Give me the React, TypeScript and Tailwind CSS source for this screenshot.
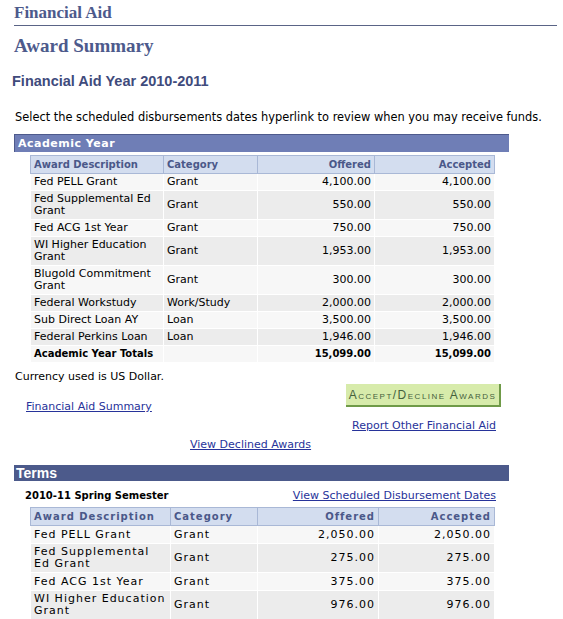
import React from "react";

type Row = { desc: string; cat: string; offered: string; accepted: string };

const yearRows: Row[] = [
  { desc: "Fed PELL Grant", cat: "Grant", offered: "4,100.00", accepted: "4,100.00" },
  { desc: "Fed Supplemental Ed Grant", cat: "Grant", offered: "550.00", accepted: "550.00" },
  { desc: "Fed ACG 1st Year", cat: "Grant", offered: "750.00", accepted: "750.00" },
  { desc: "WI Higher Education Grant", cat: "Grant", offered: "1,953.00", accepted: "1,953.00" },
  { desc: "Blugold Commitment Grant", cat: "Grant", offered: "300.00", accepted: "300.00" },
  { desc: "Federal Workstudy", cat: "Work/Study", offered: "2,000.00", accepted: "2,000.00" },
  { desc: "Sub Direct Loan AY", cat: "Loan", offered: "3,500.00", accepted: "3,500.00" },
  { desc: "Federal Perkins Loan", cat: "Loan", offered: "1,946.00", accepted: "1,946.00" },
];

const termRows: Row[] = [
  { desc: "Fed PELL Grant", cat: "Grant", offered: "2,050.00", accepted: "2,050.00" },
  { desc: "Fed Supplemental Ed Grant", cat: "Grant", offered: "275.00", accepted: "275.00" },
  { desc: "Fed ACG 1st Year", cat: "Grant", offered: "375.00", accepted: "375.00" },
  { desc: "WI Higher Education Grant", cat: "Grant", offered: "976.00", accepted: "976.00" },
];

const verdana = "font-['DejaVu_Sans',Verdana,sans-serif]";

function AwardTable({ rows, widths, spaced, totals }: { rows: Row[]; widths: number[]; spaced?: boolean; totals?: boolean }) {
  const th = "border border-[#a9b8d6] bg-[#d3ddef] px-[3px] py-[2px] text-[10px] font-bold text-[#4a5889] leading-[12px]";
  const td = "border border-white px-[3px] py-[2px] align-middle leading-[12px]";
  return (
    <table
      className={`ml-[16px] border-collapse text-[11px] text-black ${verdana} ${spaced ? "tracking-[1px]" : ""}`}
    >
      <colgroup>
        {widths.map((w, i) => (
          <col key={i} style={{ width: w }} />
        ))}
      </colgroup>
      <thead>
        <tr className="h-[18px]">
          <th className={`${th} text-left`}>Award Description</th>
          <th className={`${th} text-left`}>Category</th>
          <th className={`${th} text-right`}>Offered</th>
          <th className={`${th} text-right`}>Accepted</th>
        </tr>
      </thead>
      <tbody>
        {rows.map((r, i) => (
          <tr key={r.desc} className={`${spaced ? "h-[18px]" : "h-[17px]"} ${i % 2 === 0 ? "bg-[#f7f7f7]" : "bg-[#ececec]"}`}>
            <td className={td}>{r.desc}</td>
            <td className={td}>{r.cat}</td>
            <td className={`${td} text-right`}>{r.offered}</td>
            <td className={`${td} text-right`}>{r.accepted}</td>
          </tr>
        ))}
        {totals && (
          <tr className="h-[17px] bg-[#f7f7f7] text-[10px] font-bold">
            <td className={`${td} whitespace-nowrap`}>Academic Year Totals</td>
            <td className={td}></td>
            <td className={`${td} text-right`}>15,099.00</td>
            <td className={`${td} text-right`}>15,099.00</td>
          </tr>
        )}
      </tbody>
    </table>
  );
}

export default function App() {
  const link = `text-[11px] leading-[13px] text-[#27339a] underline ${verdana}`;
  return (
    <div className="w-[563px] bg-white pb-4 pl-[14px]">
      <div className="mr-[6px] border-b border-[#5a6486] pt-[4px] pb-[3px]">
        <h1 className="font-['Liberation_Serif',serif] text-[17px] font-bold leading-[18px] text-[#4d5a8c]">
          Financial Aid
        </h1>
      </div>
      <h2 className="mt-[10px] font-['Liberation_Serif',serif] text-[19px] font-bold leading-[20px] text-[#4d5a8c]">
        Award Summary
      </h2>
      <h3 className="mt-[17px] -ml-[2px] font-['Liberation_Sans',Arial,sans-serif] text-[14.5px] font-bold leading-[16px] text-[#3f4b7c]">
        Financial Aid Year 2010-2011
      </h3>
      <p className={`mt-[22px] ml-[1px] text-[11.4px] leading-[13px] text-black ${verdana}`}>
        Select the scheduled disbursements dates hyperlink to review when you may receive funds.
      </p>

      <div className="mt-[10px] flex h-[18px] w-[495px] items-center border-t border-l border-[#4e5a8c] bg-[#6f7eb6] pl-[3px]">
        <span className={`text-[11px] font-bold leading-[14px] tracking-[0.5px] text-white ${verdana}`}>Academic Year</span>
      </div>
      <div className="mt-[3px]">
        <AwardTable rows={yearRows} widths={[133, 94, 117, 120]} totals />
      </div>

      <p className={`mt-[7px] ml-[1px] text-[11px] leading-[13px] text-black ${verdana}`}>Currency used is US Dollar.</p>

      <div className="mt-[1px] flex w-[487px] items-start justify-between">
        <span className={`mt-[16px] ml-[12px] ${link}`}>Financial Aid Summary</span>
        <button className="h-[23px] w-[155px] border-r-2 border-b-2 border-[#6f9a48] bg-[#d7ebab] font-['Liberation_Sans',Arial,sans-serif] text-[12px] leading-[20px] tracking-[1.5px] text-[#45613c] [font-variant:small-caps]">
          Accept/Decline Awards
        </button>
      </div>
      <div className="mt-[6px] flex w-[482px] justify-end">
        <span className={link}>Report Other Financial Aid</span>
      </div>
      <div className="mt-[6px] flex pl-[176px]">
        <span className={link}>View Declined Awards</span>
      </div>

      <div className="mt-[14px] flex h-[16px] w-[495px] items-center bg-[#4c5a8b] pl-[2px]">
        <span className="font-['Liberation_Sans',Arial,sans-serif] text-[14px] font-bold leading-[16px] text-white">Terms</span>
      </div>
      <div className="mt-[8px] flex w-[482px] items-center justify-between pl-[11px]">
        <span className={`text-[10px] font-bold leading-[13px] text-black ${verdana}`}>2010-11 Spring Semester</span>
        <span className={link}>View Scheduled Disbursement Dates</span>
      </div>
      <div className="mt-[5px]">
        <AwardTable rows={termRows} widths={[140, 87, 121, 116]} spaced />
      </div>
    </div>
  );
}
